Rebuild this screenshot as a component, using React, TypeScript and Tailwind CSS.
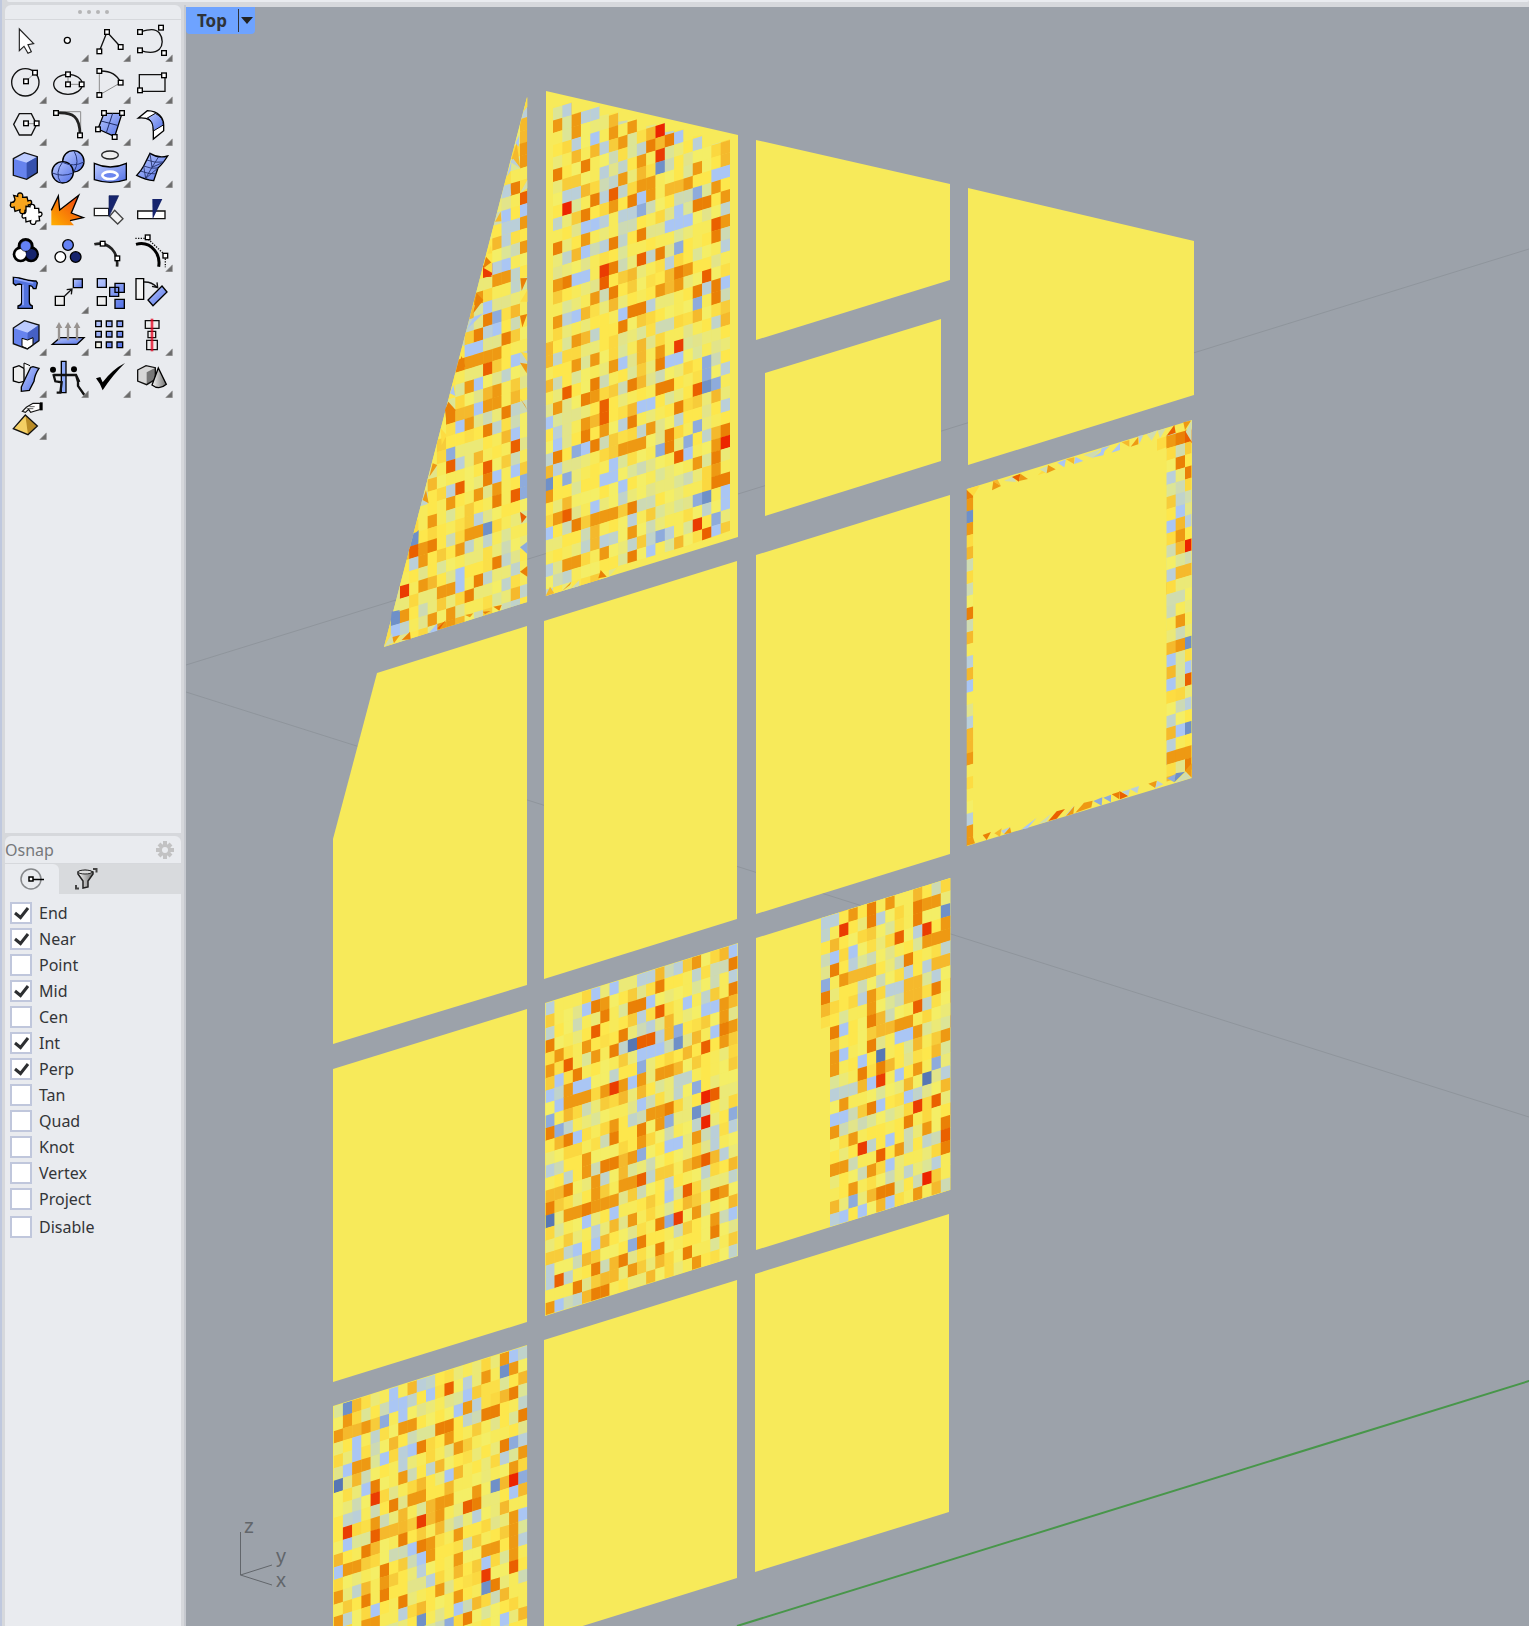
import type { ReactNode } from "react";

const palette: Record<string, string> = {
  x: "#ec2400",
  r: "#ea3c02",
  R: "#ea6000",
  d: "#ea8006",
  o: "#ee9913",
  a: "#f5b92c",
  c: "#fddc42",
  g: "#d0dcb0",
  s: "#bacfd9",
  b: "#aac6f4",
  B: "#8eabdc",
  n: "#6f90c8",
  N: "#5676b4",
};

const base = [
  "#f7ea5a", "#f7ea5a", "#f7ea5a", "#f4ee66", "#f4ee66", "#fde74c", "#fde74c", "#fde74c", "#fbdf48",
  "#fbd840", "#f7cc3a", "#f4b92d", "#ebe977", "#ebe977", "#e2e48a", "#dce596", "#cddab4", "#c0d3cb",
];

type Patch = {
  id: string;
  frame: [number, number];
  clip: string;
  x0: number;
  y0: number;
  cw: number;
  ch: number;
  slope: number;
  cols: [number, number];
  rows: [number, number];
  marks: Record<string, string>;
};

// Each patch lives in its own frame, drawn at a third of its units
const patches: Patch[] = [
  {
    id: "wedge",
    frame: [370, 80],
    clip: "472,50 472,1566 42,1700",
    x0: 450, y0: 302, cw: 27.7, ch: 36.85, slope: 0.31,
    cols: [-15, 0], rows: [-8, 38],
    marks: {
      r: "348,575 105,1530",
      R: "461,357 353,865 436,1097 243,1155 270,1220 353,1160 436,1243 133,1410",
      d: "436,322 353,715 408,770 270,850 325,760 408,995 353,1048 240,1000 353,1190 381,1255 188,1390 381,1440 325,1498 297,1545",
      o: "461,430 461,503 461,215 461,240 381,600 408,590 325,670 297,845 325,835 353,825 381,818 297,917 381,925 381,965 353,970 297,1025 381,1225 243,1265 325,1240 297,1365 325,1358 270,1400 160,1395 160,1440 215,1530 240,1525 160,1530 105,1590 188,1600 243,1590 215,1635 185,1325 188,1220 243,1620",
      a: "461,180 436,1535 461,130 188,1200 381,487 436,690 270,1625",
      s: "461,100 408,480 381,560 353,752 408,440 436,432 408,330 270,1145 243,1230 133,1450 325,1310",
      b: "408,405 408,550 353,680 381,745 297,808 325,795 436,838 461,390 325,910 325,980 270,1040 436,1058 381,1188 436,1168 270,1480 270,1515 75,1640",
      B: "381,710 243,1118 461,1200 461,1240",
      n: "353,1342 135,1370 75,1605",
    },
  },
  {
    id: "tower",
    frame: [370, 80],
    clip: "549,82 605,66 605,104 689,77 689,108 745,96 745,125 801,116 801,145 885,127 885,157 941,147 941,175 997,165 997,203 1080,178 1080,1352 941,1400 745,1458 717,1490 527,1548 527,790 549,783",
    x0: 549, y0: 85, cw: 27.95, ch: 36.85, slope: 0.308,
    cols: [-1, 18], rows: [-1, 46],
    marks: {
      x: "871,148 591,383 1067,1083",
      r: "871,222 703,570 927,795 983,1332",
      R: "1039,428 731,340 1011,583 815,535 703,607 591,938 703,980 703,1008 983,925 927,1128 591,1305 1011,1358",
      d: "899,175 843,195 647,255 563,282 675,355 787,358 647,402 731,487 563,500 871,517 1039,465 983,375 1011,365 731,635 787,690 815,680 759,740 927,572 1039,610 1039,650 983,628 591,602 871,850 731,555 815,460 647,960 787,1020 899,1065 899,1105 927,980 647,1065 675,1095 563,1130 619,1330 1067,1045 1039,1200 1067,1190 1039,1125 787,1275 787,1430 815,1080 871,920 899,910 787,915 675,930",
      o: "619,115 619,155 787,132 563,132 759,182 815,238 759,295 843,340 843,300 815,310 955,305 983,260 731,378 927,610 955,565 563,612 871,630 563,722 619,778 619,850 675,835 647,475 1067,420 731,855 871,810 1067,340 675,655 563,1000 703,1040 843,1045 759,1108 787,1100 815,1095 647,1030 675,965 675,1315 703,1300 787,1340 563,1315 731,1290 619,1445 591,1450 703,1430 983,1145 1039,1090 1039,1165 537,1245 731,155 1039,315",
      a: "871,185 843,155 537,800 537,835 537,920 1067,205 1067,715 899,320 927,310 787,970 675,210 619,225",
      s: "983,185 703,195 759,405 787,398 591,712 703,265 619,190 591,345 619,335 591,95 675,95 703,345 703,430 703,480 843,670 1067,870 899,545 1011,620 563,1165 899,1355 703,1385 787,1315 537,1460 759,1020 563,1045 647,105 1067,975 1067,490",
      b: "675,175 927,165 815,350 1039,280 1067,272 647,440 675,428 927,390 927,425 899,435 955,415 647,515 619,595 647,583 619,705 1067,605 759,700 899,835 927,828 759,848 843,965 815,975 955,1120 647,1100 563,1080 703,1195 731,1190 731,1155 759,1215 675,1280 1067,1235 1067,1275 1039,1350 843,1410 537,1355 537,1025",
      B: "815,387 983,335 927,500 983,668 1011,845 1011,880 1039,910 955,1085 871,1108 619,1110 591,1195 983,1258 1039,1313 871,1363 983,1035",
      n: "871,260 1011,915 537,1205 1011,1248",
    },
  },
  {
    id: "frame-right",
    frame: [930, 400],
    clip: "681,117 785,82 785,1120 709,1145 709,142 681,152",
    x0: 709, y0: 109, cw: 28, ch: 36.5, slope: 0.3,
    cols: [-1, 2], rows: [-1, 30],
    marks: {
      x: "775,437",
      R: "775,835 770,108",
      d: "751,112 751,187 775,220 775,1085",
      o: "723,122 751,405 751,662 751,735 751,1065 723,1075 775,1050",
      a: "751,515 775,508 723,745 723,1000 751,370 751,440 723,815",
      c: "723,415 723,160 695,135 723,560 723,890",
      g: "723,598 751,590 751,150 775,295 723,452 775,475 723,1040",
      s: "723,232 723,525 775,905 775,365 723,1035",
      b: "751,332 723,378 723,780 775,797 723,855 751,990",
      n: "775,725 775,978",
    },
  },
  {
    id: "frame-left",
    frame: [930, 400],
    clip: "109,268 130,288 130,1325 109,1337",
    x0: 109, y0: 262, cw: 21, ch: 36.3, slope: 0.3,
    cols: [0, 0], rows: [-1, 30],
    marks: {
      d: "119,638 119,285",
      o: "119,315 119,387 119,1073 119,1290 119,1320",
      a: "119,460 119,712 119,820 119,1000 119,1037",
      c: "119,530 119,1145 119,422",
      g: "119,495 119,570 119,680",
      s: "119,785 119,965 119,1253",
      b: "119,857",
      n: "119,350",
    },
  },
  {
    id: "middle",
    frame: [530, 900],
    clip: "46,310 623,130 623,1067 46,1246",
    x0: 46, y0: 310, cw: 27.5, ch: 37.5, slope: 0.312,
    cols: [0, 20], rows: [0, 24],
    marks: {
      x: "526,588 526,665",
      r: "252,562 444,952",
      R: "388,333 115,493 88,1140 526,440 472,870 526,777 334,838 553,580 360,415 334,422 197,392",
      d: "60,434 197,318 224,345 280,403 252,450 142,522 390,258 334,312 306,320 609,188 609,265 582,385 60,698 115,718 252,712 252,785 224,795 170,925 60,922 115,868 417,622 334,685 553,880 553,993 197,1104 142,1160 197,1180 224,1170 280,1080 334,1025 390,1045 472,1058 390,970",
      o: "582,425 500,187 224,308 390,520 280,555 334,540 417,510 88,460 170,440 197,468 60,512 115,570 115,605 142,600 170,590 224,570 390,635 390,672 362,650 500,710 500,780 334,720 252,675 170,780 170,815 197,845 197,885 197,915 224,910 252,900 280,855 306,850 306,765 115,945 142,935 306,960 60,1225 306,1110 609,360 582,310 582,345 582,870 500,925 500,1090 553,960",
      a: "582,160 417,355 417,392 609,320 609,790 609,900 252,1090 252,1125 60,890 88,725 362,1130 444,500 170,1190",
      s: "334,350 362,375 388,410 417,845 60,1110 60,1148 609,675 553,700 553,740 60,325 609,228 60,810 444,200 334,240 362,225 197,1010 582,770",
      b: "609,150 197,280 252,262 170,325 362,305 472,308 526,328 553,320 553,395 334,462 362,455 388,447 306,540 142,560 170,550 88,540 60,585 88,610 417,740 444,730 142,710 334,612 417,880 252,938 170,965 142,1048 197,1030 88,1215 609,940",
      B: "334,500 500,560 334,765 417,665 88,690 60,660 609,640 444,390 417,962 306,1035",
      n: "500,635 444,428",
      N: "306,433 60,960",
    },
  },
  {
    id: "east",
    frame: [530, 900],
    clip: "872,55 1262,-66 1262,869 900,980 900,378 872,387",
    x0: 900, y0: 46, cw: 27.7, ch: 37.4, slope: 0.311,
    cols: [-1, 13], rows: [-1, 26],
    marks: {
      x: "1191,835",
      r: "941,87 1163,617 1052,540 997,745 1191,85",
      R: "1108,110 1163,318 1247,703 1052,765 1219,600",
      d: "1025,25 1025,60 1163,20 1163,52 1135,178 914,207 886,293 914,397 1025,362 1025,435 1219,262 1247,665 1247,740 997,518 1052,500 1025,622 1135,662 1080,870 1052,880",
      o: "969,45 1080,12 1191,15 1219,10 941,235 1025,290 1025,325 914,470 914,508 941,612 1108,375 1135,368 1163,390 914,697 969,705 1108,748 1191,682 1163,500 914,812 941,800 1025,812 969,865 1163,878 1247,400 1191,122 1219,115 1247,100 1247,65",
      a: "886,330 1052,915 1247,555 1135,250 1163,240 1135,285 1163,275 1247,180 1219,190 1052,385 1080,378 1219,442",
      s: "914,585 886,68 914,62 1163,90 969,190 997,290 1219,225 1247,515 914,960 1219,785 1135,215 1191,200 1080,265 1108,255 1052,60",
      b: "914,170 969,152 941,385 941,460 997,482 1108,408 1135,398 1108,525 1135,590 914,660 941,650 1052,612 1025,548 1080,715 1080,795 997,932 1080,905 941,950",
      B: "1219,488 886,255 969,903",
      n: "1247,28",
      N: "1052,465 1191,535",
    },
  },
  {
    id: "corner",
    frame: [220, 1330],
    clip: "340,229 922,46 922,1000 340,1000",
    x0: 341, y0: 229, cw: 27.7, ch: 37.2, slope: 0.315,
    cols: [0, 20], rows: [0, 27],
    marks: {
      x: "880,450",
      r: "465,503 382,605 797,737 603,573",
      R: "880,710 687,175 465,618 741,530",
      d: "769,520 797,252 825,243 853,345 880,190 908,253 603,350 465,465 521,525 437,660 548,628 603,648 741,862 548,815 493,720 437,810 825,762 687,285 659,293 493,795",
      o: "853,85 880,112 382,270 437,290 354,315 741,232 548,290 576,283 410,410 437,398 687,320 713,350 576,510 603,500 687,512 659,520 659,555 631,675 713,688 713,612 797,660 825,650 880,560 880,600 880,640 880,675 410,705 382,715 493,755 659,778 713,797 354,798 354,868 437,878 465,868 908,368 880,408 548,440 797,140 631,640 769,485 465,580",
      a: "493,600 521,590 548,580 382,300 603,460 908,475 410,220 576,170 908,140 908,850 465,655",
      s: "548,355 548,400 548,855 631,750 908,620 603,165 769,560 741,150 769,225 908,330 853,380 410,560 603,720",
      b: "880,78 521,190 548,215 548,250 521,225 631,195 741,185 713,245 410,335 410,372 493,385 576,350 687,435 437,475 880,487 908,553 576,655 603,685 382,640 354,725 797,700 465,840 713,835 853,868 382,420",
      B: "493,272 880,340 908,440 687,878",
      n: "382,233 853,123 825,468 797,775 603,868",
      N: "354,465",
    },
  },
];

const panels = [
  "527,97 527,602 384,647",
  "546,91 738,135 738,537 546,596",
  "756,140 950,184 950,280 756,340",
  "765,373 941,319 941,461 765,516",
  "968,188 1194,241 1194,395 968,465",
  "967,489 1192,420 1192,778 967,846",
  "377,673 527,626 527,985 333,1044 333,839",
  "544,621 737,561 737,919 544,979",
  "756,555 950,495 950,854 756,914",
  "333,1069 527,1009 527,1322 333,1382",
  "545,1003 738,943 738,1256 545,1316",
  "756,938 950,878 950,1190 756,1250",
  "333,1406 527,1345 527,1700 333,1700",
  "544,1340 737,1280 737,1578 544,1638",
  "755,1274 949,1214 949,1512 755,1572",
];

function noise(a: number, b: number, salt: number) {
  const n = Math.sin(a * 127.1 + b * 311.7 + salt * 74.7) * 43758.5453;
  return n - Math.floor(n);
}

function Mosaic({ patch, salt }: { patch: Patch; salt: number }) {
  const { x0, y0, cw, ch, slope } = patch;
  const marked = new Map<string, string>();
  for (const [key, list] of Object.entries(patch.marks)) {
    for (const pair of list.split(" ")) {
      const [x, y] = pair.split(",").map(Number);
      const col = Math.floor((x - x0) / cw);
      const row = Math.floor((y - y0 + slope * (x - x0)) / ch);
      marked.set(`${col}:${row}`, palette[key]);
    }
  }

  const cells: ReactNode[] = [];
  for (let c = patch.cols[0]; c <= patch.cols[1]; c++) {
    for (let r = patch.rows[0]; r <= patch.rows[1]; r++) {
      const left = x0 + c * cw;
      const top = y0 + r * ch - slope * (left - x0);
      const rise = slope * cw;
      const fill = marked.get(`${c}:${r}`) ?? base[Math.floor(noise(c, r, salt) * base.length)];
      cells.push(
        <path key={`${c}:${r}`} fill={fill} d={`M${left} ${top}l${cw + 1} ${-rise}v${ch + 1}l${-cw - 1} ${rise}z`} />
      );
    }
  }

  return (
    <g transform={`translate(${patch.frame[0]} ${patch.frame[1]}) scale(0.33333)`}>
      <clipPath id={`clip-${patch.id}`}>
        <polygon points={patch.clip} />
      </clipPath>
      <g clipPath={`url(#clip-${patch.id})`}>{cells}</g>
    </g>
  );
}

// Small triangles along the borders of the meshed panels
const slivers: [string, string][] = [
  ["c", "109,268 150,256 130,288"], ["o", "190,243 213,258 186,271"], ["a", "186,243 203,239 213,258"],
  ["g", "222,243 250,228 258,246"], ["R", "246,231 271,221 267,245"], ["o", "271,221 294,237 267,243"],
  ["c", "323,226 350,198 345,218"], ["g", "328,208 354,197 350,220"], ["o", "354,195 377,208 350,220"],
  ["b", "382,188 408,178 403,202"], ["a", "408,178 433,172 432,192"], ["b", "436,170 460,183 432,192"],
  ["g", "460,165 515,146 490,175"], ["b", "515,144 540,138 510,165"], ["b", "490,172 525,148 520,166"],
  ["b", "570,128 570,150 544,158"], ["a", "575,127 598,120 598,140"], ["o", "625,110 625,133 602,140"],
  ["s", "625,108 640,105 628,132"], ["g", "650,103 683,90 665,122"], ["g", "683,92 708,85 690,115"],
  ["R", "733,75 737,98 709,108"], ["o", "760,67 783,62 765,90"], ["R", "765,98 785,90 785,130"],
  ["g", "785,60 785,125 767,95"], ["o", "109,1337 128,1310 135,1330"], ["d", "158,1305 183,1296 170,1320"],
  ["s", "213,1292 242,1280 222,1302"], ["o", "222,1303 240,1282 244,1298"], ["a", "193,1300 215,1285 210,1310"],
  ["b", "275,1288 320,1253 293,1285"], ["g", "325,1272 362,1242 350,1265"], ["R", "355,1263 380,1234 405,1227 380,1256"],
  ["s", "405,1248 433,1216 420,1240"], ["o", "408,1248 433,1218 430,1241"], ["o", "436,1238 462,1208 488,1202 484,1222"],
  ["B", "490,1203 517,1192 515,1217"], ["B", "520,1193 543,1184 543,1207"], ["d", "545,1183 568,1175 568,1198"],
  ["R", "568,1173 595,1188 570,1198"], ["s", "575,1175 600,1168 595,1188"], ["s", "600,1167 627,1158 622,1180"],
  ["o", "655,1151 680,1142 677,1165"], ["s", "682,1142 700,1153 675,1165"], ["B", "711,1135 737,1122 733,1147"],
  ["n", "737,1120 765,1115 733,1147"], ["g", "768,1115 785,1133 735,1148"], ["o", "765,1112 785,1090 785,1133"],
];

const wedgeSlivers: [string, string][] = [
  ["c", "472,50 472,80 460,95"], ["b", "436,190 448,165 446,200"], ["a", "425,236 440,190 451,264"],
  ["s", "420,245 430,236 451,264"], ["b", "410,290 425,240 422,272"], ["s", "398,345 418,312 424,345"],
  ["g", "450,340 472,300 472,325"], ["b", "449,380 472,375 458,408"], ["a", "375,425 392,395 394,424"],
  ["d", "339,565 348,530 366,550"], ["c", "352,522 363,495 366,520"], ["r", "339,565 366,590 339,592"],
  ["c", "341,564 366,545 366,578"], ["d", "451,595 472,594 455,632"], ["c", "451,665 472,630 472,665"],
  ["d", "310,700 320,640 340,660"], ["b", "291,748 312,710 340,700"], ["d", "450,707 472,702 457,742"],
  ["d", "262,865 275,828 286,860"], ["c", "452,815 472,820 472,845"], ["o", "450,848 472,852 470,880"],
  ["b", "240,940 250,915 256,948"], ["d", "225,990 235,965 257,990 230,1032"], ["c", "212,1045 230,1065 215,1095"],
  ["o", "450,955 472,990 465,975"], ["o", "178,1190 188,1150 202,1155"], ["o", "158,1260 168,1230 176,1270"],
  ["R", "450,1295 470,1310 455,1330"], ["n", "128,1368 146,1350 144,1390"], ["B", "450,1402 472,1385 472,1422"],
  ["d", "450,1475 472,1458 472,1490"], ["R", "118,1408 146,1405 120,1430"], ["n", "65,1595 90,1590 62,1625"],
  ["d", "95,1680 120,1655 122,1678"], ["o", "65,1672 90,1665 72,1690"], ["b", "176,1660 202,1630 202,1652"],
  ["R", "202,1645 228,1620 208,1648"], ["o", "285,1605 310,1600 300,1612"], ["d", "338,1595 362,1593 345,1602"],
  ["d", "370,1580 395,1575 388,1592"], ["g", "42,1700 66,1660 70,1688"],
  ["d", "685,1495 692,1470 710,1490"], ["o", "577,1532 604,1505 600,1515"], ["g", "604,1525 628,1500 628,1518"],
  ["a", "527,1548 540,1520 553,1540"],
];

function Viewport() {
  return (
    <svg className="absolute inset-0 h-full w-full" aria-label="Model viewport">
      <g transform="translate(-186 -7)">
        <path d="M186 665 1529 249M186 692 1529 1117" stroke="#8f959c" fill="none" />
        <path d="M737 1626 1529 1381 2600 1050" stroke="#48964a" strokeWidth="2" fill="none" />
        {panels.map((points) => (
          <polygon key={points} points={points} fill="#f7ea5a" />
        ))}
        {patches.map((patch, i) => (
          <Mosaic key={patch.id} patch={patch} salt={i + 1} />
        ))}
        <g transform="translate(930 400) scale(0.33333)">
          {slivers.map(([key, points]) => (
            <polygon key={points} points={points} fill={palette[key]} />
          ))}
        </g>
        <g transform="translate(370 80) scale(0.33333)">
          {wedgeSlivers.map(([key, points]) => (
            <polygon key={points} points={points} fill={palette[key]} />
          ))}
        </g>
        <path d="M240.500 1532V1575L272 1565M240.500 1575 272 1585" stroke="#62666b" fill="none" />
        <g fill="#62666b" fontSize="20" fontFamily="'Liberation Sans', sans-serif">
          <text x="244" y="1533">z</text>
          <text x="276" y="1563">y</text>
          <text x="276" y="1587">x</text>
        </g>
      </g>
    </svg>
  );
}

function Grip({ at }: { at: string }) {
  return (
    <>
      {at.split(" ").map((pair) => {
        const [x, y] = pair.split(",").map(Number);
        return <rect key={pair} x={x - 7} y={y - 7} width="14" height="14" fill="#fff" stroke="#000" strokeWidth="4" />;
      })}
    </>
  );
}

type Tool = { name: string; art: ReactNode; plain?: boolean };

const line = { fill: "none", stroke: "#111", strokeWidth: 4 };
const gray = { fill: "none", stroke: "#8c8c8c", strokeWidth: 3 };

const toolRows: { top: number; tools: Tool[] }[] = [
  {
    top: 60,
    tools: [
      { name: "Select", plain: true, art: <path d="M58 87V152L72 139 84 160 94 155 84 134 101 131Z" fill="#fff" stroke="#222" strokeWidth="3.500" /> },
      { name: "Point", art: <circle cx="202" cy="121" r="9" fill="#fff" stroke="#000" strokeWidth="4" /> },
      { name: "Polyline", art: <><path d="M298 154 321 96 362 141" {...line} /><Grip at="298,154 321,96 362,141" /></> },
      { name: "Curve", art: <><path d="M420 96C448 88 465 84 478 99 490 115 489 136 478 148 463 161 440 158 420 151" {...line} /><Grip at="420,96 483,83 420,151 492,159" /></> },
    ],
  },
  {
    top: 186,
    tools: [
      { name: "Circle", art: <><circle cx="76" cy="247" r="41" {...line} /><path d="M78 244 105 218" {...gray} /><Grip at="78,244 105,218" /></> },
      { name: "Ellipse", art: <><ellipse cx="204" cy="253" rx="43" ry="30" {...line} /><path d="M204 223V253H245" {...gray} /><Grip at="204,223 204,253 245,253" /></> },
      { name: "Arc", art: <><path d="M298 213V285L362 248" {...gray} /><path d="M298 213Q346 211 362 248" {...line} /><Grip at="298,213 298,285 362,248" /></> },
      { name: "Rectangle", art: <><path d="M418 224H495V274H418Z" {...line} /><Grip at="492,226 420,271" /></> },
    ],
  },
  {
    top: 312,
    tools: [
      { name: "Polygon", art: <><path d="M41 373 58 341H94L110 373 94 405H58Z" {...line} /><path d="M78 371H109" {...gray} /><Grip at="78,370 110,370" /></> },
      { name: "Fillet curves", art: <><path d="M170 335H242V405" {...gray} /><path d="M170 339C220 336 240 350 240 405" fill="none" stroke="#222" strokeWidth="8" /><Grip at="168,339 240,406" /></> },
      { name: "Surface from points", art: <><path d="M312 340H366L344 410 294 387Z" fill="url(#blue)" stroke="#000" strokeWidth="4" /><path d="M338 340 319 398M303 363 356 377" stroke="#1f2c66" strokeWidth="3" /><Grip at="312,339 366,339 344,411 294,388" /></> },
      { name: "Sweep surface", art: <><path d="M415 354 442 332C475 333 491 353 491 375V392L460 417V384Q459 350 415 354Z" fill="#fff" stroke="#000" strokeWidth="4" /><path d="M442 354 466 340Q490 352 490 375L460 393Q460 362 442 354Z" fill="url(#blue)" stroke="#000" strokeWidth="3" /></> },
    ],
  },
  {
    top: 18,
    tools: [
      { name: "Box", art: <><path d="M40 56 73 38 112 50V98L80 118 40 106Z" fill="#6683ee" /><path d="M40 56 73 38 112 50 80 68Z" fill="#bccbff" /><path d="M80 68 112 50V98L80 118Z" fill="#3651ad" /><path d="M40 56 73 38 112 50V98L80 118 40 106Z" {...line} /></> },
      { name: "Sphere", art: <><circle cx="220" cy="64" r="32" fill="url(#blue)" stroke="#000" strokeWidth="4" /><circle cx="188" cy="97" r="32" fill="url(#blue)" stroke="#000" strokeWidth="4" /><path d="M190 68Q220 82 252 66M222 33Q240 64 222 95M157 99Q188 112 219 99M188 66Q163 98 182 128" fill="none" stroke="#263678" strokeWidth="3" /></> },
      { name: "Project curve", art: <><path d="M283 70Q331 92 379 70V119Q331 135 283 119Z" fill="url(#blue)" stroke="#000" strokeWidth="4" /><ellipse cx="330" cy="45" rx="25" ry="12" fill="#eee" stroke="#222" strokeWidth="4" /><ellipse cx="330" cy="106" rx="23" ry="11" fill="#6b86ef" stroke="#fff" strokeWidth="8" /></> },
      { name: "Mesh", art: <><path d="M450 40Q475 56 503 48 488 72 474 84L461 122Q438 120 410 106 425 90 431 78Z" fill="url(#blue)" stroke="#000" strokeWidth="4" /><path d="M476 50 456 82 437 115M440 60Q466 70 492 66M431 78Q455 88 474 84M421 93Q445 102 468 102M450 40 456 82 492 66M431 78 437 115 474 84" fill="none" stroke="#1f2b61" strokeWidth="2.500" /></> },
    ],
  },
  {
    top: 144,
    tools: [
      { name: "Join", art: <><path d="M33 187Q44 188 45 178L41 166 53 169Q52 158 61 159 70 160 68 172L81 171 84 183Q94 178 95 187 95 195 85 195L87 210 75 211Q76 221 66 221 57 220 60 209L45 214 42 201Q32 205 31 196Z" fill="#f8a51d" stroke="#000" strokeWidth="4" /><path d="M68 221Q79 222 78 211L78 199 90 200Q90 192 98 193 106 195 104 205L116 205 117 218Q126 214 126 223 124 231 117 229L119 242 108 243Q108 254 98 253 89 252 92 242L78 246 77 233Q66 237 66 228Z" fill="#fff" stroke="#000" strokeWidth="4" /></> },
      { name: "Explode", plain: true, art: <><path d="M154 256V211L175 168 179 210 236 166 214 219 250 233 210 242 222 256Z" fill="url(#flame)" /><path d="M154 211 175 168 179 210 236 166 214 219 250 233 210 242" fill="none" stroke="#000" strokeWidth="4" /></> },
      { name: "Trim", plain: true, art: <><path d="M283 205H326V227H283Z" fill="#fff" stroke="#222" strokeWidth="4" /><path d="M344 211 369 236 353 252 329 229Z" fill="#f3f3f3" stroke="#444" strokeWidth="4" /><path d="M327 167H356L327 229Z" fill="#16246d" stroke="#111c58" strokeWidth="2" /></> },
      { name: "Split", plain: true, art: <><path d="M413 213H495V236H413Z" fill="#fff" stroke="#111" strokeWidth="4" /><path d="M457 177H487L458 238Z" fill="#16246d" /></> },
    ],
  },
  {
    top: 270,
    tools: [
      { name: "Group", art: <><g stroke="#000" strokeWidth="12"><circle cx="77" cy="318" r="18" /><circle cx="62" cy="343" r="18" /><circle cx="93" cy="343" r="18" /></g><circle cx="62" cy="343" r="16" fill="#fff" /><circle cx="94" cy="343" r="16" fill="#16246d" /><circle cx="77" cy="318" r="16" fill="#6482f5" stroke="#111" strokeWidth="2" /></> },
      { name: "Ungroup", plain: true, art: <g stroke="#000" strokeWidth="4"><circle cx="204" cy="315" r="16" fill="#6482f5" /><circle cx="181" cy="351" r="16" fill="#fff" /><circle cx="227" cy="351" r="16" fill="#16246d" /></g> },
      { name: "Edit points", plain: true, art: <><path d="M283 313Q313 305 335 326 355 348 351 380" fill="none" stroke="#222" strokeWidth="8" /><Grip at="308,311 352,355" /></> },
      { name: "Control points", art: <><path d="M408 313Q442 304 464 331 481 352 476 380" fill="none" stroke="#000" strokeWidth="9" /><path d="M406 295H442L496 346V382" fill="none" stroke="#111" strokeWidth="4" strokeDasharray="4 4" /><Grip at="443,292 496,347" /></> },
    ],
  },
  {
    top: -24,
    tools: [
      { name: "Text", plain: true, art: <><path d="M40-8 57-6Q91 4 108 3L112 9 108 26H100Q98 17 88 17V66Q88 75 97 78V85H54V78Q64 76 65 68V14L58 12Q50 12 47 16L40 10Z" fill="#5272dd" stroke="#000" strokeWidth="4" /><path d="M43-4 100 9M69 14V76" stroke="#93aafc" strokeWidth="5" /></> },
      { name: "Move", art: <><path d="M220-3H247V23H220Z" fill="url(#blue)" stroke="#000" strokeWidth="4" /><path d="M166 49H193V76H166Z" fill="#eee" stroke="#000" strokeWidth="4" /><path d="M194 48 216 27M200 29 216 27 214 43" {...line} /></> },
      { name: "Copy", plain: true, art: <g stroke="#000" strokeWidth="4"><path d="M292-4H319V22H292ZM345 10H373V37H345ZM329 22H356V49H329ZM345 58H373V85H345Z" fill="url(#blue)" /><path d="M292 50H319V76H292Z" fill="#eee" /></g> },
      { name: "Rotate", plain: true, art: <><path d="M408-4H431V58H408Z" fill="#f4f4f4" stroke="#000" strokeWidth="4" /><path d="M486 18 501 36 459 77 444 60Z" fill="url(#blue)" stroke="#000" strokeWidth="4" /><path d="M432 6Q455 5 470 21M456 19 473 23 471 7" {...line} /></> },
    ],
  },
  {
    top: 102,
    tools: [
      { name: "Solid tools", art: <><path d="M40 144 73 122 117 135V182L82 207 40 191Z" fill="#6683ee" /><path d="M40 144 73 122 117 135 83 158Z" fill="#bccbff" /><path d="M83 158 117 135V182L82 207Z" fill="#4560c4" /><path d="M66 175 83 180 99 173V196L82 206 66 199Z" fill="#fff" stroke="#000" strokeWidth="3" /><path d="M40 144 73 122 117 135V182L82 207 40 191Z" {...line} /></> },
      { name: "Extrude", art: <><path d="M180 173H252L231 193H157Z" fill="url(#blue)" stroke="#000" strokeWidth="4" /><path d="M177 181V137M204 181V137M231 181V137" stroke="#989390" strokeWidth="7" /><path d="M167 144 177 126 187 144ZM194 144 204 126 214 144ZM221 144 231 126 241 144Z" fill="#989390" /></> },
      { name: "Array", art: <g fill="url(#blue)" stroke="#000" strokeWidth="4"><path d="M287 123H304V140H287ZM319 123H336V140H319ZM351 123H368V140H351ZM287 154H304V171H287ZM319 154H336V171H319ZM351 154H368V171H351ZM319 186H336V203H319ZM351 186H368V203H351Z" /><path d="M287 186H304V203H287Z" fill="#f2f2e8" /></g> },
      { name: "Align", art: <><g fill="#eee" stroke="#111" strokeWidth="4"><path d="M436 122H477V145H436ZM444 154H467V173H444ZM440 181H472V209H440Z" /></g><path d="M456 116V214" stroke="#e6001d" strokeOpacity=".75" strokeWidth="8" /></> },
    ],
  },
  {
    top: 228,
    tools: [
      { name: "Flow", art: <><path d="M40 263 57 257 72 265V304L57 308 40 303Z" fill="#eee" stroke="#000" strokeWidth="4" /><path d="M72 266V249L90 257" fill="#fff" stroke="#000" strokeWidth="3" /><path d="M92 262 99 260 117 265Q104 284 102 304L88 331 64 334V321Q78 291 92 262Z" fill="url(#blue)" stroke="#000" strokeWidth="4" /></> },
      { name: "Cage edit", art: <><path d="M184 244H198V338H184Z" fill="#8da9f8" stroke="#000" strokeWidth="4" /><circle cx="159" cy="269" r="9" /><circle cx="222" cy="268" r="9" /><path d="M160 282 166 304 185 307 181 338H170M160 285H228L238 306M228 285 234 306V318L253 345" fill="none" stroke="#111" strokeWidth="7" /></> },
      { name: "Check", art: <path d="M288 295 301 291 308 307Q337 268 375 249 337 286 308 331Q302 312 288 295Z" fill="#000" /> },
      { name: "Primitives", art: <><path d="M413 270 438 257 466 263V298L440 314 413 303Z" fill="#d8d8d8" /><path d="M440 277 466 263V298L440 314Z" fill="#777" /><path d="M413 270 438 257 466 263V298L440 314 413 303Z" {...line} /><path d="M475 264 499 313Q478 332 456 315Z" fill="url(#steel)" stroke="#000" strokeWidth="4" /></> },
    ],
  },
  {
    top: 354,
    tools: [
      { name: "Pyramid", art: <><path d="M76 405 112 438 84 464 40 446Z" fill="#f4cf63" /><path d="M76 405 112 438 84 464Z" fill="#b98b25" /><path d="M76 405 112 438 84 464 40 446Z" {...line} /><path d="M67 394 79 382 99 370H120V389L105 393 92 397 86 388 76 397Z" fill="#fff" stroke="#111" strokeWidth="3.500" /><path d="M80 386H100M88 380H104" stroke="#111" strokeWidth="2" /><path d="M120 367H128V391H120Z" /></> },
    ],
  },
];

function ToolButton({ tool, col, top }: { tool: Tool; col: number; top: number }) {
  const left = 15 + col * 126;
  return (
    <button type="button" aria-label={tool.name} className="block h-[42px] w-[42px]">
      <svg viewBox={`${left} ${top} 126 126`} className="h-full w-full">
        {tool.art}
        {!tool.plain && (
          <path d={`M${left + 124} ${top + 105}V${top + 125}H${left + 104}Z`} fill="#6b6b6b" stroke="#8f8f8f" strokeWidth="2" />
        )}
      </svg>
    </button>
  );
}

const snaps = [
  { label: "End", on: true },
  { label: "Near", on: true },
  { label: "Point", on: false },
  { label: "Mid", on: true },
  { label: "Cen", on: false },
  { label: "Int", on: true },
  { label: "Perp", on: true },
  { label: "Tan", on: false },
  { label: "Quad", on: false },
  { label: "Knot", on: false },
  { label: "Vertex", on: false },
  { label: "Project", on: false },
];

function SnapOption({ label, on }: { label: string; on: boolean }) {
  return (
    <label className="flex h-[22px] items-center gap-[7px]">
      <span className="relative block h-[22px] w-[22px]">
        <input
          type="checkbox"
          defaultChecked={on}
          className="peer block h-[22px] w-[22px] appearance-none border-2 border-[#c0c7dc] bg-white"
        />
        <svg viewBox="0 0 22 22" className="pointer-events-none absolute inset-0 hidden peer-checked:block">
          <path d="M5 11 10.500 15.500 18 6" fill="none" stroke="#2d2f31" strokeWidth="3" />
        </svg>
      </span>
      {label}
    </label>
  );
}

function ToolPalette() {
  return (
    <section className="h-[828px] rounded-t-md bg-[#e9ebef]">
      <div className="flex h-[15px] items-center justify-center gap-[5px] border-b border-[#d6d8dc]">
        <span className="h-1 w-1 rounded-full bg-[#b5b5b6]" />
        <span className="h-1 w-1 rounded-full bg-[#b5b5b6]" />
        <span className="h-1 w-1 rounded-full bg-[#b5b5b6]" />
        <span className="h-1 w-1 rounded-full bg-[#b5b5b6]" />
      </div>
      <div className="grid w-[168px] grid-cols-4">
        {toolRows.map((row) =>
          row.tools.map((tool, col) => <ToolButton key={tool.name} tool={tool} col={col} top={row.top} />)
        )}
      </div>
    </section>
  );
}

function OsnapPanel() {
  return (
    <section className="mt-[3px] grow rounded-t-md bg-[#e9ebef]">
      <header className="flex h-7 items-center justify-between border-b border-[#d6d8dc] pr-[7px] text-[#76787b]">
        <h2>Osnap</h2>
        <button type="button" aria-label="Osnap options">
          <svg width="18" height="18" viewBox="0 0 18 18">
            <g stroke="#c2c2c3" strokeWidth="4">
              <path d="M9 0V18M0 9H18M3 3 15 15M15 3 3 15" />
            </g>
            <circle cx="9" cy="9" r="6" fill="#c2c2c3" />
            <circle cx="9" cy="9" r="3" fill="#e9ebef" />
          </svg>
        </button>
      </header>
      <div className="flex h-[30px] bg-[#d8dadd]" role="tablist">
        <button type="button" role="tab" aria-selected="true" aria-label="Snaps" className="w-[54px] rounded-tr-md bg-[#e9ebef]">
          <svg viewBox="0 0 54 30" className="h-[30px] w-[54px]">
            <circle cx="26" cy="15" r="10" fill="none" stroke="#85878a" strokeWidth="1.500" />
            <path d="M26 15.500H39" stroke="#000" strokeWidth="1.500" />
            <path d="M24 13H28V17H24Z" fill="#fff" stroke="#000" strokeWidth="1.500" />
          </svg>
        </button>
        <button type="button" role="tab" aria-selected="false" aria-label="Filters" className="w-[54px]">
          <svg viewBox="0 0 54 30" className="h-[30px] w-[54px]">
            <path d="M19 8Q26 5 34 8V10L29 17V23L24 24V17L19 10Z" fill="url(#steel)" stroke="#222" strokeWidth="1.500" />
            <ellipse cx="26" cy="8" rx="7" ry="2" fill="#ddd" stroke="#222" />
            <path d="M34 5H37.500V8.500M17 21V24.500H20" fill="none" stroke="#444" strokeWidth="2" />
          </svg>
        </button>
      </div>
      <div className="flex flex-col gap-1 pt-2 pl-[5px] text-[#333538]">
        {snaps.map((snap) => (
          <SnapOption key={snap.label} label={snap.label} on={snap.on} />
        ))}
        <div className="pt-[2px]">
          <SnapOption label="Disable" on={false} />
        </div>
      </div>
    </section>
  );
}

function Gradients() {
  return (
    <svg className="absolute h-0 w-0" aria-hidden="true">
      <defs>
        <linearGradient id="blue" x1="0" y1="0" x2="1" y2="1">
          <stop offset="0" stopColor="#bccbff" />
          <stop offset="1" stopColor="#5270e6" />
        </linearGradient>
        <linearGradient id="flame" x1="0" y1="1" x2="1" y2="0">
          <stop offset="0" stopColor="#ffb000" />
          <stop offset="1" stopColor="#ef3a10" />
        </linearGradient>
        <linearGradient id="steel">
          <stop offset="0" stopColor="#f7f7f7" />
          <stop offset="1" stopColor="#6f6f6f" />
        </linearGradient>
      </defs>
    </svg>
  );
}

export default function App() {
  return (
    <div className="flex min-h-screen flex-col bg-[#d6d8dc] font-['Noto_Sans','Open_Sans',sans-serif] text-base">
      <Gradients />
      <div className="flex h-[5px] border-l-2 border-[#bfc8de] pl-[5px]">
        <div className="h-[2px] grow rounded-b bg-[#e9ebef]" />
      </div>
      <div className="flex grow">
        {/* Side bar */}
        <aside className="flex w-[186px] shrink-0 flex-col border-r-2 border-l-2 border-r-[#c6c9cf] border-l-[#bfc8de] pr-[3px] pl-[3px]">
          <ToolPalette />
          <OsnapPanel />
        </aside>

        {/* Viewport */}
        <main className="relative mt-[2px] grow overflow-hidden bg-[#9ca2aa]">
          <Viewport />
          <div className="relative flex h-[27px] w-[69px] rounded-b bg-[#6ea3ff] text-[#2f3338]">
            <button type="button" className="w-[52px] text-[17px] font-bold">
              Top
            </button>
            <button type="button" aria-label="View menu" className="my-[2px] flex w-[17px] items-center justify-center border-l border-[#2f3338]">
              <svg width="12" height="7" viewBox="0 0 12 7">
                <path d="M0 0H12L6 7Z" fill="#222" />
              </svg>
            </button>
          </div>
        </main>
      </div>
    </div>
  );
}
